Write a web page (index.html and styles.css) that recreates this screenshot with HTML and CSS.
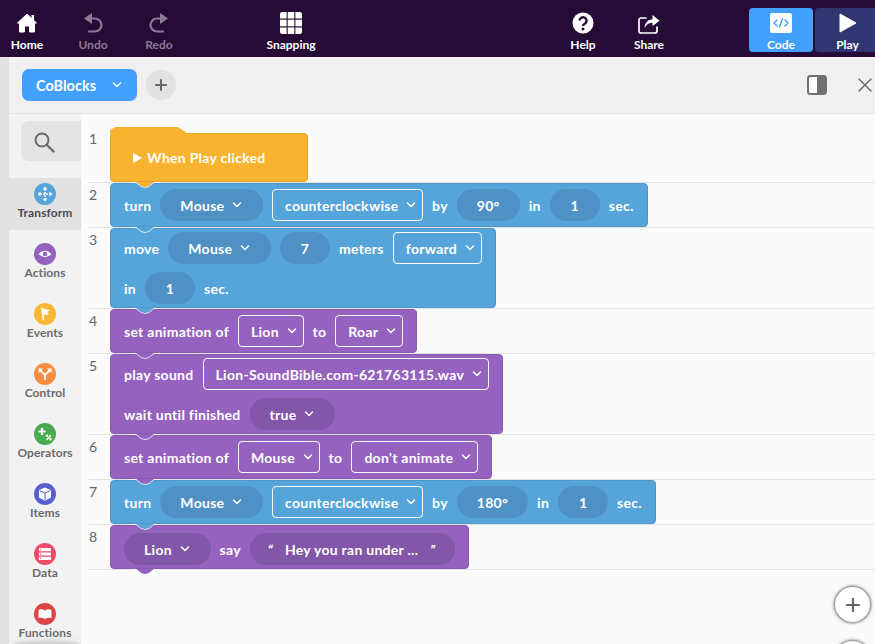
FILE: index.html
```html
<!DOCTYPE html>
<html lang="en">
<head>
<meta charset="utf-8">
<title>CoBlocks</title>
<link rel="stylesheet" href="styles.css">
</head>
<body>
<svg class="defs" width="0" height="0">
  <symbol id="chev" viewBox="0 0 12 8"><path d="M2.500 2 L6 5.500 L9.500 2" fill="none" stroke="currentColor" stroke-width="1.500" stroke-linecap="round" stroke-linejoin="round"/></symbol>
  <symbol id="notch" viewBox="0 0 30 7"><path d="M0 0 L6 0 L11 4 Q15 6.400 19 4 L24 0 L30 0" fill="currentColor"/><path d="M0 .5 L6 .5 L11 4.500 Q15 6.600 19 4.500 L24 .5 L30 .5" fill="none" stroke="#fff" stroke-opacity=".75" stroke-width="1"/></symbol>
</svg>
<header class="topbar">
  <div class="tool tool-home">
    <svg width="24" height="22" viewBox="0 0 24 22"><path d="M16.500 3 H19 V8 H16.500 Z" fill="#fff"/><path d="M12 2 L21.500 11 L19.500 11 L19.500 20 L14.500 20 L14.500 14 L9.500 14 L9.500 20 L4.500 20 L4.500 11 L2.500 11 Z" fill="#fff" stroke="#fff" stroke-width="1" stroke-linejoin="round"/></svg>
    <span>Home</span>
  </div>
  <div class="tool tool-off tool-undo">
    <svg width="24" height="22" viewBox="0 0 24 22"><path d="M3 6.500 L11 1 L11 12 Z" fill="#8a7a94"/><path d="M10 6.500 H14 a6.500 6.500 0 0 1 0 13 H8" fill="none" stroke="#8a7a94" stroke-width="2.200" stroke-linecap="round"/></svg>
    <span>Undo</span>
  </div>
  <div class="tool tool-off">
    <svg width="24" height="22" viewBox="0 0 24 22"><path d="M21 6.500 L13 1 L13 12 Z" fill="#8a7a94"/><path d="M14 6.500 H10 a6.500 6.500 0 0 0 0 13 H16" fill="none" stroke="#8a7a94" stroke-width="2.200" stroke-linecap="round"/></svg>
    <span>Redo</span>
  </div>
  <div class="tool tool-snap">
    <svg width="22" height="22" viewBox="0 0 20 20"><g fill="#fff"><path d="M0 2 a2 2 0 0 1 2-2 H6 V6 H0 Z"/><rect x="7" width="6" height="6"/><path d="M14 0 H18 a2 2 0 0 1 2 2 V6 H14 Z"/><rect y="7" width="6" height="6"/><rect x="7" y="7" width="6" height="6"/><rect x="14" y="7" width="6" height="6"/><path d="M0 14 H6 V20 H2 a2 2 0 0 1-2-2 Z"/><rect x="7" y="14" width="6" height="6"/><path d="M14 14 H20 V18 a2 2 0 0 1-2 2 H14 Z"/></g></svg>
    <span>Snapping</span>
  </div>
  <div class="tool tool-help">
    <svg width="22" height="22" viewBox="0 0 22 22"><circle cx="11" cy="11" r="10.500" fill="#fff"/><path d="M7.600 8.600 a3.500 3.300 0 1 1 5.400 2.800 c-1.300 .8-2 1.300-2 2.600" fill="none" stroke="#260b36" stroke-width="2.400"/><circle cx="11" cy="17" r="1.500" fill="#260b36"/></svg>
    <span>Help</span>
  </div>
  <div class="tool">
    <svg width="22" height="22" viewBox="0 0 22 22"><path d="M8 6 H3 a2 2 0 0 0-2 2 V19 a2 2 0 0 0 2 2 H17 a2 2 0 0 0 2-2 V15" fill="none" stroke="#fff" stroke-width="1.700" stroke-linecap="round"/><path d="M6.500 16 C7 10 10.500 7.500 14.500 7.500 V3 L21.500 8.800 L14.500 14 V10.800 C11 10.800 8.500 12.500 6.500 16 Z" fill="#fff"/></svg>
    <span>Share</span>
  </div>
  <div class="mode mode-code">
    <svg width="22" height="20" viewBox="0 0 22 20"><rect width="22" height="20" rx="2" fill="#fff"/><path d="M7 7 L4 10 L7 13 M15 7 L18 10 L15 13 M12.500 6 L9.500 14" fill="none" stroke="#42a0ff" stroke-width="1.500" stroke-linecap="round" stroke-linejoin="round"/></svg>
    <span>Code</span>
  </div>
  <div class="mode mode-play">
    <svg width="18" height="20" viewBox="0 0 18 20"><path d="M1 1 L17 10 L1 19 Z" fill="#fff" stroke="#fff" stroke-linejoin="round"/></svg>
    <span>Play</span>
  </div>
</header>

<div class="workspace">
  <div class="panel-head">
    <button class="tab-btn">CoBlocks <svg class="tab-chev"><use href="#chev"/></svg></button>
    <button class="add-btn"><svg width="12" height="12" viewBox="0 0 12 12"><path d="M6 1 V11 M1 6 H11" stroke="#666" stroke-width="2" stroke-linecap="round"/></svg></button>
    <svg class="split-icon" width="20" height="20" viewBox="0 0 20 20"><rect x="1" y="1" width="18" height="18" rx="2.500" fill="#fff" stroke="#707070" stroke-width="2"/><path d="M10 1 H17 a2 2 0 0 1 2 2 V17 a2 2 0 0 1-2 2 H10 Z" fill="#707070"/></svg>
    <svg class="close-icon" width="14" height="14" viewBox="0 0 14 14"><path d="M1 1 L13 13 M13 1 L1 13" stroke="#707070" stroke-width="1.600" stroke-linecap="round"/></svg>
  </div>
  <div class="panel-body">
    <nav class="side">
      <div class="search"><svg width="22" height="22" viewBox="0 0 22 22"><circle cx="9" cy="9" r="6.500" fill="none" stroke="#6a6a6a" stroke-width="2"/><path d="M14 14 L20.500 20.500" stroke="#6a6a6a" stroke-width="2.400" stroke-linecap="round"/></svg></div>
      <div class="cat cat-active">
        <svg width="22" height="22" viewBox="0 0 22 22"><circle cx="11" cy="11" r="11" fill="#56a5da"/><g fill="#fff"><path d="M11 3.500 L13.500 6.500 H8.500 Z M11 18.500 L13.500 15.500 H8.500 Z M3.500 11 L6.500 8.500 V13.500 Z M18.500 11 L15.500 8.500 V13.500 Z"/></g><path d="M11 6 V16 M6 11 H16" stroke="#fff" stroke-width="1.500" stroke-dasharray="2 1"/></svg>
        <span>Transform</span>
      </div>
      <div class="cat">
        <svg width="22" height="22" viewBox="0 0 22 22"><circle cx="11" cy="11" r="11" fill="#9563bf"/><path d="M4.500 11 Q11 4.500 17.500 11 Q11 17.500 4.500 11 Z" fill="#fff"/><circle cx="11" cy="11" r="2.300" fill="#9563bf"/></svg>
        <span>Actions</span>
      </div>
      <div class="cat">
        <svg width="22" height="22" viewBox="0 0 22 22"><circle cx="11" cy="11" r="11" fill="#f9b732"/><path d="M8 5.500 L9.500 16.500" stroke="#fff" stroke-width="1.800" stroke-linecap="round"/><path d="M8.500 5.500 L16 7 L13.500 9 L15 11.500 L9.500 12 Z" fill="#fff"/></svg>
        <span>Events</span>
      </div>
      <div class="cat">
        <svg width="22" height="22" viewBox="0 0 22 22"><circle cx="11" cy="11" r="11" fill="#f58e40"/><path d="M11 17 V12 L6.500 7.500 M11 12 L15.500 7.500" fill="none" stroke="#fff" stroke-width="1.800"/><path d="M4.500 5.500 H9 L4.500 10 Z M17.500 5.500 H13 L17.500 10 Z" fill="#fff"/></svg>
        <span>Control</span>
      </div>
      <div class="cat">
        <svg width="22" height="22" viewBox="0 0 22 22"><circle cx="11" cy="11" r="11" fill="#48ab4f"/><path d="M8 5 V12 M4.500 8.500 H11.500" stroke="#fff" stroke-width="2.200"/><path d="M12.500 17 L17 12" stroke="#fff" stroke-width="1.400"/><circle cx="13" cy="12.800" r="1.300" fill="#fff"/><circle cx="16.500" cy="16.300" r="1.300" fill="#fff"/></svg>
        <span>Operators</span>
      </div>
      <div class="cat">
        <svg width="22" height="22" viewBox="0 0 22 22"><circle cx="11" cy="11" r="11" fill="#5a5fd0"/><path d="M11 4.500 L17 7 V14.500 L11 17.800 L5 14.500 V7 Z" fill="#fff"/><path d="M5.500 7.500 L11 10 L16.500 7.500 M11 10 V17" fill="none" stroke="#5a5fd0" stroke-width="1"/></svg>
        <span>Items</span>
      </div>
      <div class="cat">
        <svg width="22" height="22" viewBox="0 0 22 22"><circle cx="11" cy="11" r="11" fill="#ef4a68"/><g fill="#fff"><rect x="5" y="5" width="12" height="3.200" rx=".6"/><rect x="5" y="9.400" width="12" height="3.200" rx=".6"/><rect x="5" y="13.800" width="12" height="3.200" rx=".6"/></g><g fill="#ef4a68"><circle cx="6.600" cy="6.600" r=".7"/><circle cx="6.600" cy="11" r=".7"/><circle cx="6.600" cy="15.400" r=".7"/></g></svg>
        <span>Data</span>
      </div>
      <div class="cat">
        <svg width="22" height="22" viewBox="0 0 22 22"><circle cx="11" cy="11" r="11" fill="#dd4545"/><path d="M4.500 7 Q8 5.500 11 7.500 Q14 5.500 17.500 7 V15 Q14 14 11 16 Q8 14 4.500 15 Z" fill="#fff"/></svg>
        <span>Functions</span>
      </div>
      <div class="side-fade"></div>
    </nav>

    <main class="code">
      <div class="row row-first">
        <span class="num">1</span>
        <div class="block hat">
          <span class="play-tri"></span><span class="txt">When Play clicked</span>
          <svg class="notch c-orange"><use href="#notch"/></svg>
        </div>
      </div>
      <div class="row">
        <span class="num">2</span>
        <div class="block blue">
          <div class="line">
            <span class="txt">turn</span>
            <span class="pill">Mouse <svg class="chev"><use href="#chev"/></svg></span>
            <span class="drop">counterclockwise <svg class="chev"><use href="#chev"/></svg></span>
            <span class="txt">by</span>
            <span class="pill pill-val">90°</span>
            <span class="txt">in</span>
            <span class="pill pill-num">1</span>
            <span class="txt">sec.</span>
          </div>
          <svg class="notch c-blue"><use href="#notch"/></svg>
        </div>
      </div>
      <div class="row">
        <span class="num">3</span>
        <div class="block blue block-tall">
          <div class="line">
            <span class="txt">move</span>
            <span class="pill">Mouse <svg class="chev"><use href="#chev"/></svg></span>
            <span class="pill pill-num">7</span>
            <span class="txt">meters</span>
            <span class="drop">forward <svg class="chev"><use href="#chev"/></svg></span>
          </div>
          <div class="line">
            <span class="txt">in</span>
            <span class="pill pill-num">1</span>
            <span class="txt">sec.</span>
          </div>
          <svg class="notch c-blue"><use href="#notch"/></svg>
        </div>
      </div>
      <div class="row">
        <span class="num">4</span>
        <div class="block purple">
          <div class="line">
            <span class="txt">set animation of</span>
            <span class="drop">Lion <svg class="chev"><use href="#chev"/></svg></span>
            <span class="txt">to</span>
            <span class="drop">Roar <svg class="chev"><use href="#chev"/></svg></span>
          </div>
          <svg class="notch c-purple"><use href="#notch"/></svg>
        </div>
      </div>
      <div class="row">
        <span class="num">5</span>
        <div class="block purple block-tall">
          <div class="line">
            <span class="txt">play sound</span>
            <span class="drop">Lion-SoundBible.com-621763115.wav <svg class="chev"><use href="#chev"/></svg></span>
          </div>
          <div class="line">
            <span class="txt">wait until finished</span>
            <span class="pill">true <svg class="chev"><use href="#chev"/></svg></span>
          </div>
          <svg class="notch c-purple"><use href="#notch"/></svg>
        </div>
      </div>
      <div class="row">
        <span class="num">6</span>
        <div class="block purple">
          <div class="line">
            <span class="txt">set animation of</span>
            <span class="drop">Mouse <svg class="chev"><use href="#chev"/></svg></span>
            <span class="txt">to</span>
            <span class="drop">don't animate <svg class="chev"><use href="#chev"/></svg></span>
          </div>
          <svg class="notch c-purple"><use href="#notch"/></svg>
        </div>
      </div>
      <div class="row">
        <span class="num">7</span>
        <div class="block blue">
          <div class="line">
            <span class="txt">turn</span>
            <span class="pill">Mouse <svg class="chev"><use href="#chev"/></svg></span>
            <span class="drop">counterclockwise <svg class="chev"><use href="#chev"/></svg></span>
            <span class="txt">by</span>
            <span class="pill pill-val">180°</span>
            <span class="txt">in</span>
            <span class="pill pill-num">1</span>
            <span class="txt">sec.</span>
          </div>
          <svg class="notch c-blue"><use href="#notch"/></svg>
        </div>
      </div>
      <div class="row">
        <span class="num">8</span>
        <div class="block purple block-say">
          <div class="line">
            <span class="pill">Lion <svg class="chev"><use href="#chev"/></svg></span>
            <span class="txt">say</span>
            <span class="pill pill-str"><i class="quote">“</i> Hey you ran under ... <i class="quote">”</i></span>
          </div>
          <svg class="notch c-purple"><use href="#notch"/></svg>
        </div>
      </div>
      <button class="fab fab-one"><svg width="14" height="14" viewBox="0 0 14 14"><path d="M7 1 V13 M1 7 H13" stroke="#666" stroke-width="2.200" stroke-linecap="round"/></svg></button>
      <button class="fab fab-two"></button>
    </main>
  </div>
</div>
</body>
</html>
```

FILE: styles.css
```css
* { box-sizing: border-box; }
html, body { margin: 0; height: 100%; }
body {
  width: 875px;
  height: 644px;
  overflow: hidden;
  font-family: Lato, "Open Sans", sans-serif;
  background: #e2e2e2;
  display: flex;
  flex-direction: column;
}
.defs { position: absolute; }

.topbar {
  height: 57px;
  flex: none;
  background: #260b36;
  display: flex;
  align-items: flex-start;
  color: #fff;
}
.tool {
  width: 66px;
  height: 52px;
  padding-top: 12px;
  display: flex;
  flex-direction: column;
  align-items: center;
  font-size: 12px;
  font-weight: 700;
  line-height: 14px;
}
.tool svg { flex: none; margin-bottom: 4px; }
.tool-home { width: 54px; }
.tool-undo { margin-left: 6px; }
.tool-off { color: #8a7a94; }
.tool-snap { margin-left: 66px; }
.tool-help { margin-left: 226px; }
.mode {
  height: 44px;
  margin-top: 8px;
  display: flex;
  flex-direction: column;
  align-items: center;
  padding-top: 5px;
  font-size: 12px;
  font-weight: 700;
  line-height: 14px;
  gap: 5px;
}
.mode-code { width: 64px; margin-left: 67px; background: #42a0ff; border-radius: 4px; }
.mode-play { width: 60px; margin-left: 2px; padding-left: 5px; background: #2f3672; border-radius: 4px 0 0 4px; }

.workspace {
  flex: 1;
  margin-left: 9px;
  min-height: 0;
  display: flex;
  flex-direction: column;
}
.panel-head {
  height: 57px;
  flex: none;
  background: #f0f0f0;
  border-bottom: 1px solid #e4e4e4;
  display: flex;
  align-items: center;
  padding-left: 13px;
}
button { font-family: inherit; border: 0; padding: 0; }
.tab-btn {
  width: 115px;
  height: 32px;
  background: #42a0ff;
  color: #fff;
  border-radius: 7px;
  font-size: 14.500px;
  font-weight: 700;
  display: flex;
  align-items: center;
  padding-left: 14px;
}
.tab-chev { width: 12px; height: 8px; margin-left: 15px; }
.add-btn {
  width: 30px;
  height: 30px;
  margin-left: 9px;
  border-radius: 50%;
  background: #e2e2e2;
  display: flex;
  align-items: center;
  justify-content: center;
}
.split-icon { margin-left: 631px; }
.close-icon { margin-left: 31px; }

.panel-body { flex: 1; min-height: 0; display: flex; }
.side {
  width: 72px;
  flex: none;
  background: #f2f2f2;
  position: relative;
  overflow: hidden;
  padding-top: 7px;
}
.search {
  height: 40px;
  margin-left: 12px;
  margin-bottom: 17px;
  background: #e4e4e4;
  border-radius: 8px 0 0 8px;
  padding: 10px 0 0 12px;
}
.cat {
  height: 52px;
  margin-bottom: 8px;
  padding-top: 5px;
  display: flex;
  flex-direction: column;
  align-items: center;
  color: #6a6a6a;
  font-size: 12px;
  font-weight: 700;
  letter-spacing: .1px;
  line-height: 14px;
}
.cat svg { flex: none; margin-bottom: 1px; }
.cat-active { background: #e2e2e2; color: #4a4a4a; }
.side-fade {
  position: absolute;
  left: 4px;
  right: 0;
  bottom: -6px;
  height: 10px;
  border-radius: 50%;
  background: #cfcfcf;
  filter: blur(2px);
}

.code {
  flex: 1;
  min-width: 0;
  background: #fafafa;
  position: relative;
  padding-left: 8px;
  overflow: hidden;
}
.row {
  display: flex;
  align-items: flex-start;
  border-bottom: 1px solid #e4e4e4;
}
.row-first { padding-top: 13px; }
.num {
  width: 21px;
  flex: none;
  color: #666;
  font-size: 14px;
  line-height: 16px;
  padding-top: 4px;
}
.block {
  position: relative;
  color: #fff;
  font-size: 14px;
  letter-spacing: .28px;
  font-weight: 700;
  border-radius: 4px;
  display: flex;
  flex-direction: column;
  gap: 8px;
  border: 1px solid transparent;
  padding: 5px 13px;
}
.block-tall { padding-top: 3px; padding-bottom: 3px; }
.block-say { padding-top: 7px; padding-bottom: 3px; }
.blue { background: #56a5da; border-color: #4f97c8; }
.purple { background: #9563bf; border-color: #8a59b2; }
.hat {
  margin-top: 6px;
  width: 198px;
  height: 49px;
  background: #f8b431;
  border-color: #e3a62c;
  flex-direction: row;
  align-items: center;
  gap: 5px;
  padding: 0 0 0 22px;
}
.hat::before {
  content: "";
  position: absolute;
  left: -1px;
  top: -7px;
  width: 81px;
  height: 8px;
  background: #f8b431;
  clip-path: polygon(0 100%, 0 40%, 5px 0, 68px 0, 80px 100%);
}
.play-tri {
  width: 0;
  height: 0;
  border-left: 9px solid #fff;
  border-top: 5.500px solid transparent;
  border-bottom: 5.500px solid transparent;
}
.line { display: flex; align-items: center; gap: 9px; white-space: nowrap; height: 32px; }
.pill, .drop {
  height: 32px;
  display: inline-flex;
  align-items: center;
  white-space: pre;
}
.pill { gap: 3px; padding: 0 20px; border-radius: 16px; background: #4f91c4; }
.purple .pill { background: #8256a8; }
.pill-num { padding: 0; width: 50px; justify-content: center; }
.pill-str { gap: 8px; padding: 0 20px 0 18px; }
.quote { font-style: italic; }
.drop { gap: 3px; padding: 0 5px 0 12px; border: 1px solid #fff; border-radius: 4px; }
.chev { width: 12px; height: 8px; flex: none; }
.notch {
  position: absolute;
  left: 19px;
  bottom: -8px;
  width: 30px;
  height: 7px;
  z-index: 2;
  overflow: visible;
}
.c-orange { color: #f8b431; }
.c-blue { color: #56a5da; }
.c-purple { color: #9563bf; }

.fab {
  position: absolute;
  left: 754px;
  width: 35px;
  height: 35px;
  border-radius: 50%;
  background: #fff;
  box-shadow: 0 0 3px 1px #666;
  display: flex;
  align-items: center;
  justify-content: center;
}
.fab-one { top: 473px; }
.fab-two { top: 527px; }
```
